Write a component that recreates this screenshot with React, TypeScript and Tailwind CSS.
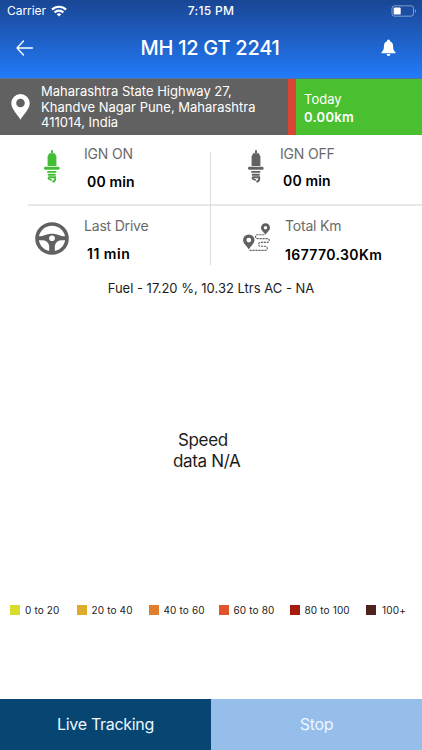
import type {ReactNode} from 'react'

const SparkPlug = () => (
  <svg width="18" height="35" viewBox="0 0 18 35" fill="currentColor">
    <path d="M8.300 1h1.400l.6 3.200H7.700z"/>
    <path d="M6.200 4.200h5.600l1.600 3.300v9.500H4.600V7.500z"/>
    <rect x="1" y="17.800" width="15.600" height="3" rx="1.400"/>
    <rect x="4.200" y="21.900" width="9.200" height="1.900" rx=".5"/>
    <rect x="4.800" y="24.700" width="8" height="2" rx=".6"/>
    <path d="M5.400 28.300h6.800c.4 2.300-.5 4-2.800 4.600" fill="none" stroke="currentColor" strokeWidth="1.900"/>
    <path d="M5.600 28v1.800l3.200 1.400" fill="none" stroke="currentColor" strokeWidth="1.600"/>
  </svg>
)

const SteeringWheel = () => (
  <svg width="34" height="33" viewBox="0 0 34 34" preserveAspectRatio="none">
    <circle cx="17" cy="17" r="15" fill="none" stroke="currentColor" strokeWidth="3.600"/>
    <path fillRule="evenodd" fill="currentColor"
      d="M3 14.700c5 .6 8-2.700 14-2.700s9 3.300 14 2.700v4h-5c-3.500.3-5.600 2.600-6.200 6V32h-5.600v-7.300c-.6-3.400-2.700-5.700-6.200-6H3zM17 13.800a2.900 2.900 0 1 0 0 5.800 2.900 2.900 0 0 0 0-5.800z"/>
  </svg>
)

const RoutePins = () => (
  <svg width="28" height="29" viewBox="0 0 28 29">
    <path fillRule="evenodd" fill="currentColor"
      d="M22.500.3a4.500 4.500 0 0 0-4.500 4.500c0 2.700 3 4.500 4.500 7 1.500-2.500 4.500-4.300 4.500-7A4.500 4.500 0 0 0 22.500.3zm0 2.800a1.700 1.700 0 1 1 0 3.400 1.700 1.700 0 0 1 0-3.400z"/>
    <path fillRule="evenodd" fill="currentColor"
      d="M5.800 11.400A5.700 5.700 0 0 0 .1 17.100c0 3.600 3.900 6 5.700 9.500 1.800-3.500 5.700-5.900 5.700-9.500a5.700 5.700 0 0 0-5.700-5.700zm0 3.300a2.400 2.400 0 1 1 0 4.800 2.400 2.400 0 0 1 0-4.800z"/>
    <path d="M21.500 11.700h-7c-2.600 0-2.600 3.900 0 3.900H24c3 0 3 3.800 0 3.800h-6.500c-2.600 0-2.600 3.900 0 3.900H22c3 0 3 4.100 0 4.100H6.500"
      fill="none" stroke="currentColor" strokeWidth="1.100" strokeDasharray="2.200 .8"/>
  </svg>
)

const legend = [
  {label: '0 to 20', color: 'bg-[#d8dc2c]', width: 'w-[66.500px]'},
  {label: '20 to 40', color: 'bg-[#dfab2b]', width: 'w-[72px]'},
  {label: '40 to 60', color: 'bg-[#e07e2b]', width: 'w-[70px]'},
  {label: '60 to 80', color: 'bg-[#e2552c]', width: 'w-[71px]'},
  {label: '80 to 100', color: 'bg-[#a51b0e]', width: 'w-[76.500px]'},
  {label: '100+', color: 'bg-[#4f231b]', width: 'w-[50px]', labelClass: 'pl-px'},
]

type StatProps = {
  icon: ReactNode
  label: string
  value: string
  className: string
  valueClass: string
}

const Stat = ({icon, label, value, className, valueClass}: StatProps) => (
  <div className={`flex items-start ${className}`}>
    {icon}
    <div className="whitespace-nowrap">
      <p className="text-[14px] leading-5 tracking-[-0.200px] text-[#6a6a6a]">{label}</p>
      <p className={`text-[14px] leading-5 font-semibold text-black ${valueClass}`}>{value}</p>
    </div>
  </div>
)

const Header = () => (
  <header className="h-[78px] bg-linear-to-b from-[#194695] to-[#217bf9] text-white">
    <div className="grid h-[22px] grid-cols-3 items-center pl-[7px] pr-[5px]">
      <div className="flex items-center gap-[5px]">
        <span className="text-[12px] tracking-[-0.050px]">Carrier</span>
        <svg width="16" height="12" viewBox="0 0 16 12" fill="none" stroke="white" strokeWidth="2.200">
          <path d="M1 4.600a10 10 0 0 1 14 0"/>
          <path d="M3.600 7.400a6.200 6.200 0 0 1 8.800 0"/>
          <path d="M8 11.600 5.700 9.300a3.300 3.300 0 0 1 4.600 0z" fill="white" stroke="none"/>
        </svg>
      </div>
      <span className="pr-[2px] text-center text-[12px] font-medium tracking-[0.300px]">7:15 PM</span>
      <svg className="justify-self-end" width="26" height="12" viewBox="0 0 26 12">
        <rect x="1" y=".8" width="21.500" height="10.400" rx="2.600" fill="none" stroke="white" strokeOpacity=".45"/>
        <rect x="2.700" y="2.400" width="7" height="7.200" rx="1.200" fill="white"/>
        <path d="M24 4.200c1.300.5 1.300 3.100 0 3.600z" fill="white" fillOpacity=".5"/>
      </svg>
    </div>
    <div className="flex h-[52px] items-center pl-4 pr-[26px]">
      <svg width="18" height="16" viewBox="0 0 18 16" fill="none" stroke="white" strokeWidth="1.300"
        strokeLinecap="round" strokeLinejoin="round">
        <path d="M16.500 8H1M7.500 1 1 8l6.500 7"/>
      </svg>
      <h1 className="flex-1 pl-[5px] text-center text-[20px] font-medium tracking-[-0.250px]">MH 12 GT 2241</h1>
      <svg width="15" height="18" viewBox="0 0 15 18" fill="white">
        <circle cx="7.500" cy="2" r="1.500"/>
        <path d="M7.500 2c3 0 4.600 2.200 4.600 5 0 3.300.5 4.700 2.400 6.300v.9H.5v-.9C2.400 11.700 2.900 10.300 2.900 7c0-2.800 1.600-5 4.600-5z"/>
        <path d="M5.600 15.100h3.800a1.900 1.900 0 0 1-3.800 0z"/>
      </svg>
    </div>
  </header>
)

const App = () => {
  return (
    <div className="flex h-[750px] w-[422px] flex-col overflow-hidden bg-white font-['Inter',sans-serif]">
      <Header/>
      <section className="flex h-[57px] border-t border-[#55729c] text-white">
        <div className="flex w-[288px] items-center bg-[#616161] pl-[11px]">
          <svg width="19" height="26" viewBox="0 0 19 26" fill="white">
            <path fillRule="evenodd"
              d="M9.500 0A9.200 9.200 0 0 0 .3 9.200C.3 15.500 7 20.500 9.500 25.800c2.500-5.300 9.200-10.300 9.200-16.600A9.200 9.200 0 0 0 9.500 0zm0 4.700a4.300 4.300 0 1 1 0 8.600 4.300 4.300 0 0 1 0-8.600z"/>
          </svg>
          <p className="ml-[11px] pt-px text-[13px] leading-[15.700px] whitespace-nowrap">
            Maharashtra State Highway 27,<br/>
            Khandve Nagar Pune, Maharashtra<br/>
            411014, India
          </p>
        </div>
        <div className="w-2 bg-[#d84436]"/>
        <div className="flex-1 bg-[#4ac031] pt-[11px] pl-2 text-[13px] leading-[18px]">
          <p>Today</p>
          <p className="font-semibold tracking-[0.300px]">0.00km</p>
        </div>
      </section>

      <section className="flex h-[130px] pl-7">
        <div className="w-[182px]">
          <Stat className="h-[71px] border-b-2 border-[#e8e8e8] pt-[9px] pl-[15px]"
            icon={<span className="mt-[5px] mr-[23px] text-[#43bd35]"><SparkPlug/></span>}
            label="IGN ON" value="00 min" valueClass="mt-2 pl-[3px] tracking-[0.150px]"/>
          <Stat className="pt-[10px] pl-[7px]"
            icon={<span className="mt-[6px] mr-[15px] text-[#616161]"><SteeringWheel/></span>}
            label="Last Drive" value="11 min" valueClass="mt-[8px] pl-[3px] tracking-[0.500px]"/>
        </div>
        <div className="mt-[17px] w-px bg-[#dedede]"/>
        <div className="flex-1">
          <Stat className="h-[71px] border-b-2 border-[#e8e8e8] pt-[9px] pl-[36px]"
            icon={<span className="mt-[5px] mr-[15px] text-[#616161]"><SparkPlug/></span>}
            label="IGN OFF" value="00 min" valueClass="mt-[7px] pl-[3px] tracking-[0.150px]"/>
          <Stat className="pt-[10px] pl-[32px]"
            icon={<span className="mt-[7px] mr-[14px] text-[#616161]"><RoutePins/></span>}
            label="Total Km" value="167770.30Km" valueClass="mt-[9px] tracking-[0.380px]"/>
        </div>
      </section>

      <p className="mt-[13px] text-center text-[13px] leading-5 text-[#1c1c1c]">
        Fuel - 17.20 %, 10.32 Ltrs AC - NA
      </p>

      <div className="mt-[132px] pl-[173px] text-[17px] leading-[20.500px] tracking-[-0.350px] text-[#1c1c1c]">
        <p className="pl-[5px]">Speed</p>
        <p>data N/A</p>
      </div>

      <div className="mt-[132px] flex h-[14px] items-center pl-[10px]">
        {legend.map((item) => (
          <div key={item.label} className={`flex items-center gap-[5px] ${item.width}`}>
            <span className={`size-[10px] ${item.color}`}/>
            <span className={`text-[10px] tracking-[0.150px] whitespace-nowrap text-[#222] ${item.labelClass ?? ''}`}>
              {item.label}
            </span>
          </div>
        ))}
      </div>

      <footer className="mt-auto flex h-[51px] text-[16px] tracking-[-0.300px] text-[#eef6ff]">
        <button className="w-1/2 bg-[#074673] pb-px">Live Tracking</button>
        <button className="w-1/2 bg-[#95beeb] pb-px">Stop</button>
      </footer>
    </div>
  )
}

export default App
